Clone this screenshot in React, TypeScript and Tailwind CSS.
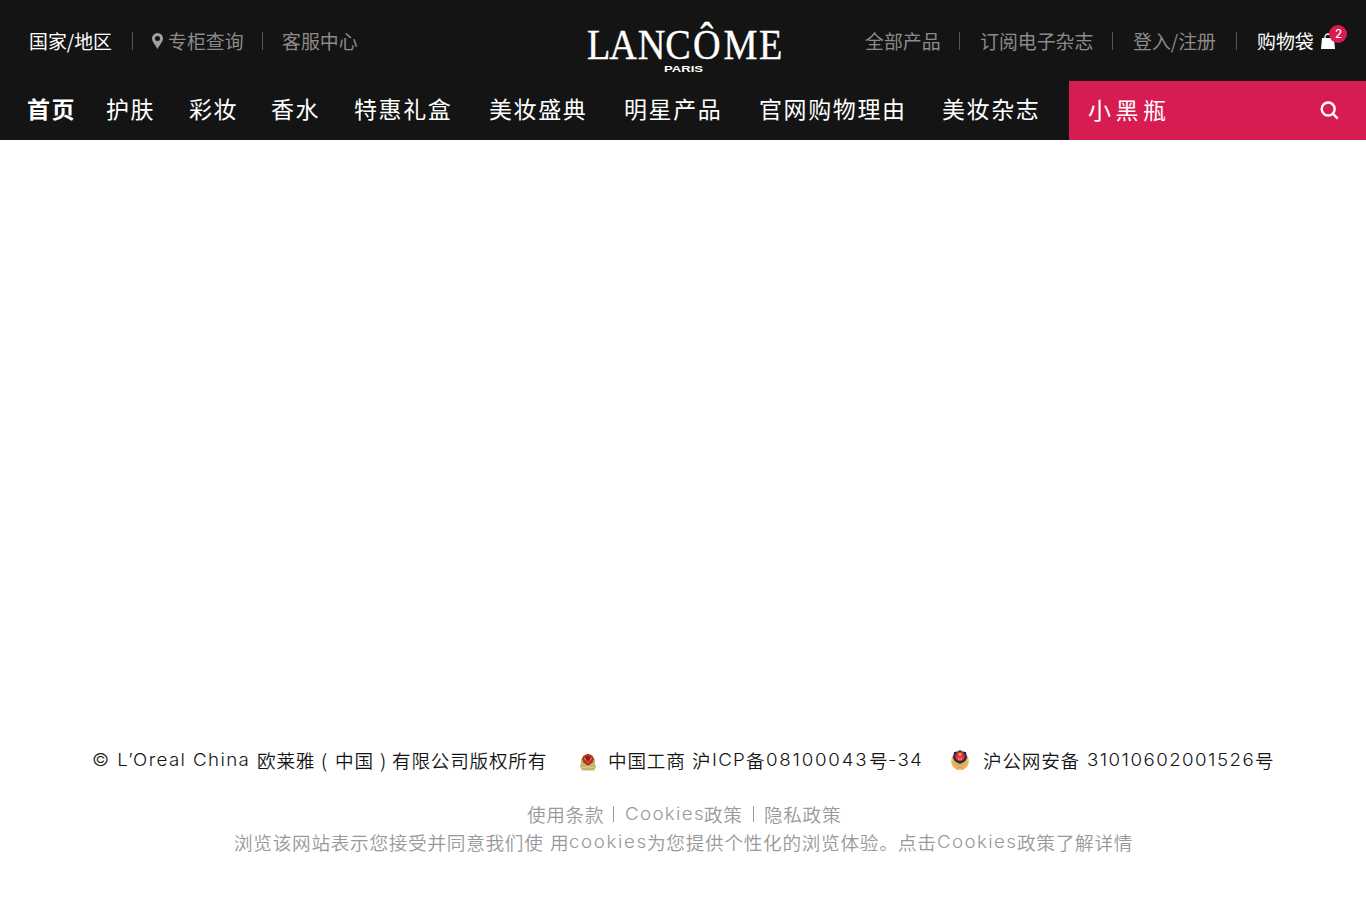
import React from 'react';

const nav = [
  { t: '首页', c: 'w-[79px] font-bold' },
  { t: '护肤', c: 'w-[83px]' },
  { t: '彩妆', c: 'w-[82px]' },
  { t: '香水', c: 'w-[83px]' },
  { t: '特惠礼盒', c: 'w-[135px]' },
  { t: '美妆盛典', c: 'w-[135px] pt-px' },
  { t: '明星产品', c: 'w-[135px]' },
  { t: '官网购物理由', c: 'w-[183px] pt-px' },
  { t: '美妆杂志', c: 'w-[120px] pt-px' },
];

const Divider = () => <span className="h-[18px] w-px shrink-0 bg-[#555]" />;

function Logo() {
  return (
    <svg className="mt-[14px] h-[64px] w-[200px] shrink-0" viewBox="0 0 200 64" fill="#fff">
      <g transform="scale(.91 1)">
        <text x="1 25.5 57 87 117.5 151 190" y="45" fontSize="42" fontFamily="Liberation Serif, serif" stroke="#fff" strokeWidth=".35">LANCÔME</text>
      </g>
      <text x="78" y="58" fontSize="8.5" fontWeight="700" textLength="39" lengthAdjust="spacingAndGlyphs" fontFamily="Liberation Sans, sans-serif">PARIS</text>
    </svg>
  );
}

function IcpBadge() {
  return (
    <svg className="h-[18px] w-[16px] shrink-0" viewBox="0 0 16 18">
      <path d="M1 7 3 3 7 1 12 2 15 7 15 11 16 14 14 17.5H2L0 13 1 10Z" fill="#c4b56b" />
      <path d="M2 6 3.5 3 8 .8 12.5 3 14 6 12.5 9.5 8 13 3.5 9.5Z" fill="#b92b20" />
      <path d="m4 5 4 4.5L12 4.5" stroke="#e9a067" strokeWidth="1" fill="none" />
      <path d="m6 4 2-1 2 1-.5 3L8 9 6 7Z" fill="#941c18" />
      <path d="M2 14.5h4l2-1.5 2 1.5h4" stroke="#ddd08f" strokeWidth="1.2" fill="none" />
    </svg>
  );
}

function PoliceBadge() {
  return (
    <svg className="h-[20px] w-[18px] shrink-0" viewBox="0 0 18 20">
      <path d="M1 6 0 12l2 5 4 3h6l4-3 2-5-1-6-8-5Z" fill="#ecb85f" />
      <path d="M9 0 11.5 1.5 15 2 16 8 14 11.5 9 14 4 11.5 2 8 3 2 6.5 1.5Z" fill="#1e2860" />
      <circle cx="9" cy="6.3" r="4.8" fill="#d7332b" />
      <path d="m9 2.4.6 1.3 1.4.1-1 1 .3 1.4L9 5.5l-1.3.7.3-1.4-1-1 1.4-.1Z" fill="#f4bd43" />
      <path d="M6.2 8h5.6M7 9.7h4" stroke="#f0a645" strokeWidth=".7" />
      <path d="m2 13 3 2.5L9 14l4 1.5 3-2.5M5 18.5l4-1.5 4 1.5" stroke="#d1923f" strokeWidth=".8" fill="none" />
    </svg>
  );
}

const Latin = ({ children, className }: { children: React.ReactNode; className: string }) => (
  <span className={`shrink-0 whitespace-pre font-['Inter','Noto_Sans_CJK_SC',sans-serif] text-[17.5px] font-light ${className}`}>
    <span className="inline-block origin-left scale-x-[1.07]">{children}</span>
  </span>
);

export default function App() {
  return (
    <div className="flex h-[900px] w-[1366px] flex-col overflow-hidden bg-white font-['Noto_Sans_CJK_SC',sans-serif]">
      <header className="flex h-[140px] shrink-0 flex-col bg-[#141414] text-white">
        <div className="flex h-[81px] text-[18.9px] leading-[24px] whitespace-nowrap">
          <div className="flex w-[586px] items-center pl-[29px] text-[#8b8b8b]">
            <span className="w-[103px] text-white">国家/地区</span>
            <Divider />
            <svg className="ml-[19px] h-[16px] w-[11px]" viewBox="0 0 11 16" fill="#a0a0a0">
              <path fillRule="evenodd" d="M5.5 0A5.5 5.5 0 0 0 0 5.5C0 9 3.5 12 5.5 16 7.5 12 11 9 11 5.5A5.5 5.5 0 0 0 5.5 0Zm0 3a2.5 2.5 0 1 1 0 5 2.5 2.5 0 0 1 0-5Z" />
            </svg>
            <span className="ml-[5px] w-[94px]">专柜查询</span>
            <Divider />
            <span className="ml-[19px]">客服中心</span>
          </div>
          <Logo />
          <div className="flex grow items-center pl-[79px] text-[#8b8b8b]">
            <span className="w-[94px]">全部产品</span>
            <Divider />
            <span className="ml-[20px] w-[132px]">订阅电子杂志</span>
            <Divider />
            <span className="ml-[20px] w-[103px]">登入/注册</span>
            <Divider />
            <span className="ml-[20px] w-[64px] text-white">购物袋</span>
            <span className="relative h-[16px] w-[14px]">
              <svg className="h-[16px] w-[14px]" viewBox="0 0 14 16">
                <path d="M1 5h12l1 11H0Z" fill="#fff" />
                <path d="M4 6V4a3 3 0 0 1 6 0v2" stroke="#fff" strokeWidth="1.3" fill="none" />
              </svg>
              <span className="absolute -top-[8px] left-[8px] flex size-[18px] items-center justify-center rounded-full bg-[#d61c50] pl-px font-['Inter',sans-serif] text-[11.5px] font-medium text-white">2</span>
            </span>
          </div>
        </div>
        <div className="flex h-[59px]">
          <nav className="flex w-[1069px] items-center pb-[6px] pl-[27px] text-[23px] leading-[28px] tracking-[1.6px] whitespace-nowrap">
            {nav.map((n) => (
              <a key={n.t} className={`shrink-0 ${n.c}`}>{n.t}</a>
            ))}
          </nav>
          <div className="flex grow items-center justify-between bg-[#d61c50] pr-[27px] pl-[19px]">
            <span className="pb-[3px] text-[23px] leading-[28px] tracking-[4.5px]">小黑瓶</span>
            <svg className="size-[19px]" viewBox="0 0 19 19" fill="none" stroke="#fff" strokeWidth="2.4">
              <circle cx="8.2" cy="8" r="6.5" />
              <path d="m12.8 12.6 5 5" />
            </svg>
          </div>
        </div>
      </header>
      <main className="h-[607px] shrink-0" />
      <footer className="flex flex-col text-[18.6px] font-[350] whitespace-nowrap">
        <div className="flex h-[26px] items-center pl-[92px] leading-[26px] tracking-[0.8px] text-[#151515]">
          <Latin className="w-[165px] tracking-[1.3px]">© L’Oreal China</Latin>
          <span className="w-[59px]">欧莱雅</span>
          <span className="w-[19px] pl-[5px]">(</span>
          <span className="w-[45px]">中国</span>
          <span className="w-[12px]">)</span>
          <span className="w-[188px]">有限公司版权所有</span>
          <span className="pt-[3px]"><IcpBadge /></span>
          <span className="ml-[12px] w-[84px]">中国工商</span>
          <span className="w-[20px]">沪</span>
          <Latin className="w-[34px] tracking-[1.2px]">ICP</Latin>
          <span className="w-[20px]">备</span>
          <Latin className="w-[103px] tracking-[1.65px]">08100043</Latin>
          <span className="w-[19px]">号</span>
          <Latin className="w-[63px] tracking-[1.1px]">-34</Latin>
          <PoliceBadge />
          <span className="ml-[14px] w-[104px]">沪公网安备</span>
          <Latin className="w-[168px] tracking-[1.35px]">31010602001526</Latin>
          <span>号</span>
        </div>
        <div className="mt-[27px] flex h-[28px] items-center pl-[527px] leading-[28px] tracking-[0.7px] text-[#999]">
          <span className="w-[86px]">使用条款</span>
          <span className="h-[16px] w-px bg-[#999]" />
          <Latin className="ml-[11px] w-[79px] tracking-[1.25px]">Cookies</Latin>
          <span className="w-[49px]">政策</span>
          <span className="h-[16px] w-px bg-[#999]" />
          <span className="ml-[10px]">隐私政策</span>
        </div>
        <div className="flex h-[28px] items-center pl-[234px] leading-[28px] tracking-[0.75px] text-[#999]">
          <span className="w-[316px]">浏览该网站表示您接受并同意我们使</span>
          <span className="w-[19px]">用</span>
          <Latin className="w-[78px] tracking-[1.5px]">cookies</Latin>
          <span className="w-[251px]">为您提供个性化的浏览体验。</span>
          <span className="w-[39px]">点击</span>
          <Latin className="w-[80px] tracking-[1.3px]">Cookies</Latin>
          <span>政策了解详情</span>
        </div>
      </footer>
    </div>
  );
}
